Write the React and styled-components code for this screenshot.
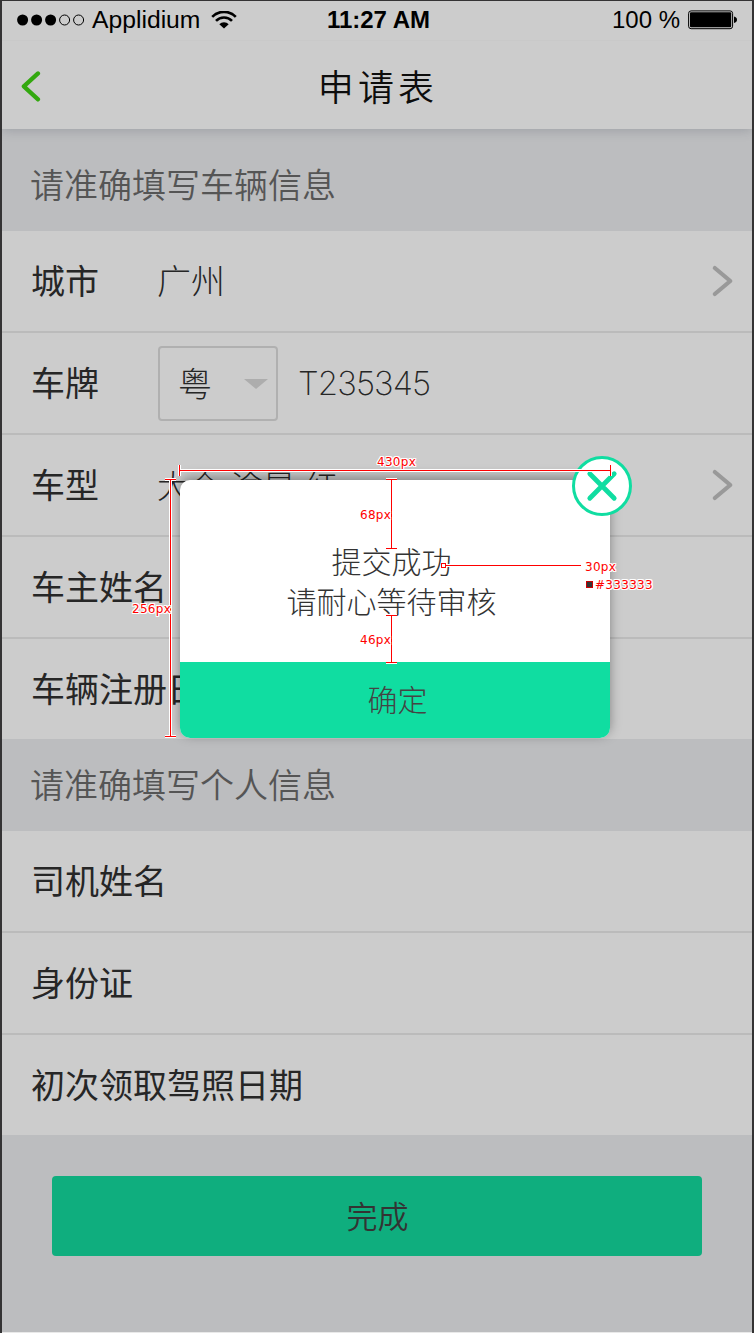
import React from 'react';
import styled, { createGlobalStyle } from 'styled-components';

const GlobalStyle = createGlobalStyle`
  * { box-sizing: border-box; }
  body { margin: 0; background: #e9e9e9; }
`;

const cjk = '"Noto Sans CJK SC", sans-serif';
const latin = '"Liberation Sans", Arial, sans-serif';

const Screen = styled.div`
  position: relative;
  width: 754px;
  height: 1333px;
  overflow: hidden;
  display: flex;
  flex-direction: column;
  border: solid #343334;
  border-width: 1px 2px 0;
  background: #bcbdbf;
  font-family: ${cjk};
  color: #262626;
`;

const Header = styled.header`
  position: relative;
  flex: none;
  height: 128px;
  background: #ccc;
  box-shadow: 0 2px 10px rgba(60, 70, 80, 0.22);
`;

const StatusBar = styled.div`
  display: grid;
  grid-template-columns: 1fr auto 1fr;
  align-items: center;
  height: 40px;
  padding: 0 14px 2px 15px;
  border-bottom: 1px solid #c9c9c9;
  font-family: ${latin};
  font-size: 24px;
  line-height: 38px;
  color: #000;
`;

const StatusGroup = styled.div`
  display: flex;
  align-items: center;
  justify-content: ${(p) => (p.$end ? 'flex-end' : 'flex-start')};
`;

const Carrier = styled.span`
  margin: 0 11px 0 7px;
  font-size: 24.7px;
`;

const Clock = styled.span`
  margin-left: 2px;
  font-size: 24px;
  font-weight: 700;
`;

const Percent = styled.span`
  margin-right: 8px;
`;

const TitleBar = styled.div`
  display: grid;
  grid-template-columns: 1fr auto 1fr;
  align-items: center;
  height: 88px;
  padding: 2px 19px 0 17px;
`;

const Title = styled.h1`
  margin: -3px 0 0 4px;
  font-size: 36px;
  line-height: 44px;
  font-weight: 350;
  letter-spacing: 4.2px;
  color: #0d0d0d;
`;

const SectionTitle = styled.h2`
  flex: none;
  display: flex;
  align-items: center;
  height: ${(p) => p.$height}px;
  margin: 0;
  padding: ${(p) => p.$top}px 28px ${(p) => p.$bottom}px;
  font-size: 34px;
  line-height: 40px;
  font-weight: 350;
  color: #555;
`;

const List = styled.div`
  flex: none;
  display: flex;
  flex-direction: column;
  gap: 2px;
  background: #bbb;
`;

const Row = styled.div`
  display: flex;
  align-items: center;
  height: 100px;
  padding: 0 18px 0 29px;
  background: #ccc;
`;

const Label = styled.span`
  min-width: 126px;
  padding-bottom: 2px;
  font-size: 34px;
  line-height: 40px;
  font-weight: 400;
  white-space: nowrap;
`;

const Value = styled.span`
  flex: 1;
  padding-bottom: 2px;
  font-size: ${(p) => p.$size || 34}px;
  line-height: 40px;
  font-weight: 300;
  word-spacing: 3px;
  white-space: nowrap;
`;

const PlateNumber = styled.span`
  margin-left: 20px;
  padding-bottom: 1px;
  font-family: Inter, ${latin};
  font-size: 33px;
  font-weight: 200;
  letter-spacing: -0.9px;
`;

const Region = styled.div`
  display: flex;
  align-items: center;
  justify-content: space-between;
  width: 120px;
  height: 75px;
  margin-left: 1px;
  padding: 0 8px 2px 18px;
  border: 2px solid #b0b0b0;
  border-radius: 4px;
  font-size: 34px;
  font-weight: 300;
`;

const Footer = styled.div`
  flex: 1;
  padding: 41px 50px 0;
`;

const Submit = styled.button`
  display: block;
  width: 100%;
  height: 80px;
  padding: 0 0 2px 1px;
  border: 0;
  border-radius: 4px;
  background: #0fae7e;
  color: #333;
  font: 350 31px/78px ${cjk};
`;

const BottomEdge = styled.div`
  flex: none;
  height: 1px;
  background: #e9e9e9;
`;

const Dialog = styled.div`
  position: absolute;
  left: 178px;
  top: 479px;
  width: 430px;
  height: 258px;
  display: flex;
  flex-direction: column;
  border-radius: 10px;
  background: #fff;
  box-shadow: 0 -3px 12px rgba(0, 0, 0, 0.36);
  color: #333;
`;

const Message = styled.p`
  flex: 1;
  margin: 0;
  padding: 60px 7px 0 0;
  text-align: center;
  font-size: 30px;
  line-height: 40px;
  font-weight: 300;
`;

const Confirm = styled.button`
  height: 76px;
  padding: 0 0 4px 5px;
  border: 0;
  border-radius: 0 0 10px 10px;
  background: #10dda1;
  color: #444;
  font: 300 30px/72px ${cjk};
`;

const Close = styled.button`
  position: absolute;
  right: -22px;
  top: -24px;
  width: 60px;
  height: 60px;
  display: flex;
  align-items: center;
  justify-content: center;
  padding: 0;
  border: 3px solid #10dda1;
  border-radius: 50%;
  background: #fff;
`;

const Overlay = styled.div`
  position: absolute;
  inset: -1px -2px 0;
  pointer-events: none;
`;

const Note = styled.span`
  position: absolute;
  left: ${(p) => p.$x}px;
  top: ${(p) => p.$y}px;
  font: 12px/14px "DejaVu Sans", sans-serif;
  letter-spacing: 0.3px;
  color: #f00;
  white-space: nowrap;
  text-shadow: 1px 0 #fff, -1px 0 #fff, 0 1px #fff, 0 -1px #fff,
    1px 1px #fff, -1px -1px #fff, 1px -1px #fff, -1px 1px #fff;
`;

const Swatch = styled.span`
  position: absolute;
  left: 586px;
  top: 581px;
  width: 7px;
  height: 7px;
  border: 1px solid #c00;
  background: #333;
  box-shadow: 0 0 0 1px #fff;
`;

const Signal = () => (
  <svg width="68" height="12" viewBox="0 0 68 12">
    {[0, 1, 2, 3, 4].map((i) => (
      <circle
        key={i}
        cx={5.6 + i * 14}
        cy="6"
        r={i < 3 ? 5.5 : 5}
        fill={i < 3 ? '#000' : 'none'}
        stroke={i < 3 ? 'none' : '#000'}
      />
    ))}
  </svg>
);

const Wifi = () => (
  <svg width="26" height="18" viewBox="0 0 26 18">
    <g fill="none" stroke="#000" strokeWidth="2.6">
      <path d="M1.2 5.8A16.5 16.5 0 0 1 24.8 5.8" />
      <path d="M5 9.9A11 11 0 0 1 21 9.9" />
    </g>
    <path d="M8.3 13.3A6.6 6.6 0 0 1 17.7 13.3L13 17.5Z" />
  </svg>
);

const Battery = () => (
  <svg width="50" height="20" viewBox="0 0 50 20">
    <rect x="0.6" y="0.9" width="44" height="17.8" rx="2.5" fill="none" stroke="#000" />
    <rect x="2" y="2.3" width="41.2" height="15" rx="1" />
    <path d="M46 6.5Q49 7.2 49 9.8T46 13Z" />
  </svg>
);

const Back = () => (
  <svg width="22" height="32" viewBox="0 0 22 32">
    <path d="M19 3.4L4.8 16.4L19 29.4" fill="none" stroke="#33a80f" strokeWidth="4.2" strokeLinecap="round" strokeLinejoin="round" />
  </svg>
);

const Chevron = () => (
  <svg width="24" height="34" viewBox="0 0 24 34">
    <path d="M4.8 4L20.3 17L4.8 30" fill="none" stroke="#999" strokeWidth="4.2" strokeLinecap="round" strokeLinejoin="round" />
  </svg>
);

const Cross = () => (
  <svg width="34" height="34" viewBox="0 0 34 34">
    <path d="M4.8 4.8L29.2 29.2M29.2 4.8L4.8 29.2" stroke="#10dda1" strokeWidth="4.8" strokeLinecap="round" />
  </svg>
);

const Caret = () => (
  <svg width="24" height="14" viewBox="0 0 24 14">
    <path d="M0 4H24L12 14Z" fill="#adadad" />
  </svg>
);

const dimensionPath =
  'M179.5 465v11M180 470.5h430M610.5 465v11' +
  'M165 479.5h11M170.5 479v258M165 736.5h11' +
  'M386 479.5h11M391.5 479v70M386 548.5h11' +
  'M386 615.5h11M391.5 615v48M386 662.5h11';

const Guides = () => (
  <svg width="754" height="1333" viewBox="0 0 754 1333" fill="none">
    <path d={dimensionPath} stroke="#fff" strokeWidth="3" />
    <path d={dimensionPath} stroke="#f00" />
    <path d="M446 565.5h135" stroke="#fff" strokeWidth="3" />
    <path d="M446 565.5h135" stroke="#f00" />
    <rect x="441.5" y="563.5" width="4" height="4" fill="#fff" stroke="#f00" />
  </svg>
);

const notes = [
  { text: '430px', x: 377, y: 455 },
  { text: '68px', x: 360, y: 508 },
  { text: '256px', x: 132, y: 602 },
  { text: '46px', x: 360, y: 633 },
  { text: '30px', x: 585, y: 560 },
  { text: '#333333', x: 595, y: 578 },
];

export default function App() {
  return (
    <Screen>
      <GlobalStyle />
      <Header>
        <StatusBar>
          <StatusGroup>
            <Signal />
            <Carrier>Applidium</Carrier>
            <Wifi />
          </StatusGroup>
          <Clock>11:27 AM</Clock>
          <StatusGroup $end>
            <Percent>100 %</Percent>
            <Battery />
          </StatusGroup>
        </StatusBar>
        <TitleBar>
          <Back />
          <Title>申请表</Title>
        </TitleBar>
      </Header>

      <SectionTitle $height={102} $top={10} $bottom={2}>请准确填写车辆信息</SectionTitle>
      <List>
        <Row>
          <Label>城市</Label>
          <Value>广州</Value>
          <Chevron />
        </Row>
        <Row>
          <Label>车牌</Label>
          <Region>
            粤
            <Caret />
          </Region>
          <PlateNumber>T235345</PlateNumber>
        </Row>
        <Row>
          <Label>车型</Label>
          <Value $size={32}>大众 途昂 红</Value>
          <Chevron />
        </Row>
        <Row>
          <Label>车主姓名</Label>
        </Row>
        <Row>
          <Label>车辆注册日期</Label>
        </Row>
      </List>

      <SectionTitle $height={92} $top={0} $bottom={2}>请准确填写个人信息</SectionTitle>
      <List>
        <Row>
          <Label>司机姓名</Label>
        </Row>
        <Row>
          <Label>身份证</Label>
        </Row>
        <Row>
          <Label>初次领取驾照日期</Label>
        </Row>
      </List>

      <Footer>
        <Submit>完成</Submit>
      </Footer>
      <BottomEdge />

      <Dialog>
        <Message>
          提交成功
          <br />
          请耐心等待审核
        </Message>
        <Confirm>确定</Confirm>
        <Close aria-label="关闭">
          <Cross />
        </Close>
      </Dialog>

      <Overlay>
        <Guides />
        {notes.map((n) => (
          <Note key={n.text} $x={n.x} $y={n.y}>
            {n.text}
          </Note>
        ))}
        <Swatch />
      </Overlay>
    </Screen>
  );
}
